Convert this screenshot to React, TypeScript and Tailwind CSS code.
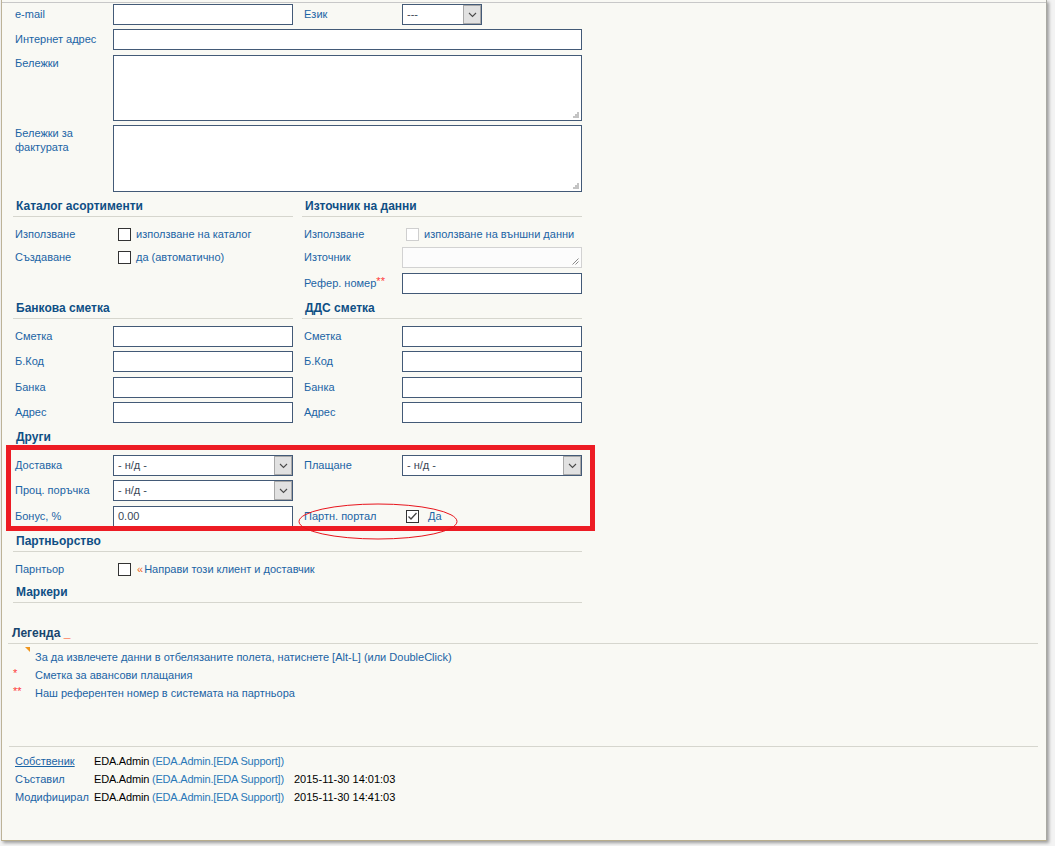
import React from "react";

const LBL = "text-[#1b64a5]";

function Input({ w = 180, children }: { w?: number; children?: React.ReactNode }) {
  return (
    <div
      className="h-[21px] border border-[#435a77] bg-white pl-[4px] leading-[19px] text-[#3a4656]"
      style={{ width: w }}
    >
      {children}
    </div>
  );
}

function Chevron() {
  return (
    <svg width="9" height="6" viewBox="0 0 9 6">
      <path d="M1 1 L4.5 4.5 L8 1" fill="none" stroke="#4a4a4a" strokeWidth="1.1" />
    </svg>
  );
}

function Select({ w = 180, value }: { w?: number; value: string }) {
  return (
    <div
      className="h-[21px] border border-[#435a77] bg-white flex"
      style={{ width: w }}
    >
      <div className="flex-1 pl-[4px] leading-[19px] text-[#3a4656]">{value}</div>
      <div className="w-[18px] h-[19px] bg-[#e1e1e1] border border-[#a8a8a8] flex items-center justify-center">
        <Chevron />
      </div>
    </div>
  );
}

function Grip() {
  return (
    <svg width="7" height="7" viewBox="0 0 7 7" className="absolute right-[2px] bottom-[2px]">
      <rect x="5" y="1" width="2" height="2" fill="#c4c4c4" />
      <rect x="3" y="3" width="2" height="2" fill="#c4c4c4" />
      <rect x="5" y="3" width="2" height="2" fill="#c4c4c4" />
      <rect x="1" y="5" width="2" height="2" fill="#c4c4c4" />
      <rect x="3" y="5" width="2" height="2" fill="#c4c4c4" />
      <rect x="5" y="5" width="2" height="2" fill="#c4c4c4" />
    </svg>
  );
}

function TextArea({ h }: { h: number }) {
  return (
    <div
      className="relative w-[469px] border border-[#435a77] bg-white"
      style={{ height: h }}
    >
      <Grip />
    </div>
  );
}

function Checkbox({ checked = false, disabled = false }: { checked?: boolean; disabled?: boolean }) {
  return (
    <div
      className={
        "w-[13px] h-[13px] border bg-white flex items-center justify-center " +
        (disabled ? "border-[#cfcfcf]" : "border-[#333333]")
      }
    >
      {checked && (
        <svg width="11" height="11" viewBox="0 0 11 11">
          <path d="M1.5 5.5 L4 8 L9.5 2" fill="none" stroke="#444" strokeWidth="1.3" />
        </svg>
      )}
    </div>
  );
}

function Heading({ children }: { children: React.ReactNode }) {
  return (
    <div className="h-[20px] border-b border-[#d6d6ce] pl-[3px] font-bold text-[12px] leading-[19px] text-[#0f4f85]">
      {children}
    </div>
  );
}

function Row({
  label,
  children,
  h = 21,
  mt = 0,
}: {
  label: React.ReactNode;
  children?: React.ReactNode;
  h?: number;
  mt?: number;
}) {
  return (
    <div className="flex items-center" style={{ height: h, marginTop: mt }}>
      <div className={"w-[100px] pl-[2px] " + LBL}>{label}</div>
      {children}
    </div>
  );
}

export default function App() {
  return (
    <div className="relative w-[1055px] h-[846px] bg-[#f3f3f3] overflow-hidden font-['Liberation_Sans',Arial,sans-serif] text-[11px]">
      <div className="relative ml-[1px] w-[1046px] h-[841px] bg-[#f9f9f4] border-l border-l-[#bdb398] border-r border-r-[#a9a9a2] border-b border-b-[#b8ad8c] shadow-[2px_2px_3px_rgba(0,0,0,0.35)]">
        <div className="h-[2px]" />
        <div className="border-t border-[#c8c8c8]" />

        {/* form */}
        <div className="ml-[11px] w-[569px] pt-[1px]">
          <div className="grid grid-cols-[280px_280px] gap-x-[9px]">
            <Row label="e-mail">
              <Input />
            </Row>
            <Row label="Език">
              <Select w={80} value="---" />
            </Row>
          </div>
          <Row label="Интернет адрес" mt={4}>
            <Input w={469} />
          </Row>
          <div className="flex mt-[5px]">
            <div className={"w-[100px] pl-[2px] pt-[1px] leading-[14px] " + LBL}>Бележки</div>
            <TextArea h={66} />
          </div>
          <div className="flex mt-[4px]">
            <div className={"w-[100px] pl-[2px] pt-[1px] leading-[14px] " + LBL}>
              Бележки за
              <br />
              фактурата
            </div>
            <TextArea h={67} />
          </div>

          {/* catalog / source */}
          <div className="grid grid-cols-[280px_280px] gap-x-[9px] mt-[5px]">
            <div>
              <Heading>Каталог асортименти</Heading>
              <div className="mt-[7px]">
                <Row label="Използване" h={20}>
                  <div className="ml-[5px] flex items-center gap-[5px]">
                    <Checkbox />
                    <span className={LBL}>използване на каталог</span>
                  </div>
                </Row>
                <Row label="Създаване" mt={3}>
                  <div className="ml-[5px] flex items-center gap-[5px]">
                    <Checkbox />
                    <span className={LBL}>да (автоматично)</span>
                  </div>
                </Row>
              </div>
            </div>
            <div>
              <Heading>Източник на данни</Heading>
              <div className="mt-[7px]">
                <Row label="Използване" h={20}>
                  <div className="ml-[4px] flex items-center gap-[5px]">
                    <Checkbox disabled />
                    <span className={LBL}>използване на външни данни</span>
                  </div>
                </Row>
                <Row label="Източник" mt={3}>
                  <div className="relative w-[180px] h-[21px] border border-[#d2d2d2] bg-[#fcfcfc]">
                    <svg width="7" height="7" viewBox="0 0 7 7" className="absolute right-[2px] bottom-[2px]">
                      <path d="M6.5 0.5 L0.5 6.5 M6.5 3.5 L3.5 6.5" stroke="#8a8a8a" strokeWidth="1" />
                    </svg>
                  </div>
                </Row>
                <Row
                  label={
                    <>
                      Рефер. номер<span className="text-[#ff3b3b] relative top-[-2px]">**</span>
                    </>
                  }
                  mt={5}
                >
                  <Input />
                </Row>
              </div>
            </div>
          </div>

          {/* bank / vat */}
          <div className="grid grid-cols-[280px_280px] gap-x-[9px] mt-[5px]">
            {["Банкова сметка", "ДДС сметка"].map((t) => (
              <div key={t}>
                <Heading>{t}</Heading>
                <div className="mt-[7px]">
                  <Row label="Сметка">
                    <Input />
                  </Row>
                  <Row label="Б.Код" mt={4}>
                    <Input />
                  </Row>
                  <Row label="Банка" mt={5}>
                    <Input />
                  </Row>
                  <Row label="Адрес" mt={4}>
                    <Input />
                  </Row>
                </div>
              </div>
            ))}
          </div>

          {/* others */}
          <div className="grid grid-cols-[280px_280px] gap-x-[9px] mt-[5px]">
            <div>
              <Heading>Други</Heading>
              <div className="mt-[7px]">
                <Row label="Доставка">
                  <Select value="- н/д -" />
                </Row>
                <Row label="Проц. поръчка" mt={4}>
                  <Select value="- н/д -" />
                </Row>
                <Row label="Бонус, %" mt={5}>
                  <Input>0.00</Input>
                </Row>
              </div>
            </div>
            <div>
              <div className="h-[20px] border-b border-[#d6d6ce]" />
              <div className="mt-[7px]">
                <Row label="Плащане">
                  <Select value="- н/д -" />
                </Row>
                <div className="h-[21px] mt-[4px]" />
                <Row label="Партн. портал" mt={5}>
                  <div className="ml-[4px] flex items-center gap-[9px]">
                    <Checkbox checked />
                    <span className={LBL}>Да</span>
                  </div>
                </Row>
              </div>
            </div>
          </div>

          {/* partnership */}
          <div className="mt-[5px]">
            <Heading>Партньорство</Heading>
            <div className="mt-[7px]">
              <Row label="Парнтьор" h={20}>
                <div className="ml-[5px] flex items-center">
                  <Checkbox />
                  <span className="ml-[6px] text-[#f26522]">«</span>
                  <span className={"ml-[1px] " + LBL}>Направи този клиент и доставчик</span>
                </div>
              </Row>
            </div>
          </div>

          <div className="mt-[4px]">
            <Heading>Маркери</Heading>
          </div>
        </div>

        {/* legend */}
        <div className="ml-[6px] w-[1030px] mt-[21px]">
          <div className="h-[20px] border-b border-[#d6d6ce] pl-[4px] leading-[19px] font-bold text-[12px] text-[#17456e]">
            Легенда <span className="text-[#ff4a10]">_</span>
          </div>
          <div className="mt-[4px] pl-[5px]">
            <div className="flex h-[18px] items-center">
              <div className="w-[22px] h-[18px] relative">
                <svg width="5" height="5" viewBox="0 0 5 5" className="absolute left-[12px] top-[-1px]">
                  <polygon points="0,0 5,0 5,5" fill="#f0961e" />
                </svg>
              </div>
              <span className={LBL}>
                За да извлечете данни в отбелязаните полета, натиснете [Alt-L] (или DoubleClick)
              </span>
            </div>
            <div className="flex h-[18px] items-center">
              <div className="w-[22px] text-[#ff3b3b] relative top-[-2px]">*</div>
              <span className={LBL}>Сметка за авансови плащания</span>
            </div>
            <div className="flex h-[18px] items-center">
              <div className="w-[22px] text-[#ff3b3b] relative top-[-2px]">**</div>
              <span className={LBL}>Наш референтен номер в системата на партньора</span>
            </div>
          </div>
        </div>

        {/* owner */}
        <div className="ml-[7px] w-[1029px] mt-[44px] border-t border-[#d6d6ce]">
          <div className="mt-[5px] pl-[6px]">
            {[
              ["Собственик", ""],
              ["Съставил", "2015-11-30 14:01:03"],
              ["Модифицирал", "2015-11-30 14:41:03"],
            ].map(([l, d], i) => (
              <div key={l} className="flex h-[18px] items-center">
                <div className={"w-[79px] " + LBL + (i === 0 ? " underline" : "")}>{l}</div>
                <div className="w-[200px] tracking-[-0.2px]">
                  <span className="text-black">EDA.Admin </span>
                  <span className="text-[#2a78b8]">(EDA.Admin.[EDA Support])</span>
                </div>
                <div className="text-black">{d}</div>
              </div>
            ))}
          </div>
        </div>

        {/* annotations */}
        <div className="absolute left-[4px] top-[445px] w-[589px] h-[86px] border-[5px] border-[#ed1c24] pointer-events-none" />
        <svg
          className="absolute left-[296px] top-[503px] pointer-events-none"
          width="161"
          height="38"
          viewBox="0 0 161 38"
        >
          <ellipse cx="80" cy="18.5" rx="79" ry="17.5" fill="none" stroke="#e8141c" strokeWidth="1" />
        </svg>
      </div>
    </div>
  );
}
